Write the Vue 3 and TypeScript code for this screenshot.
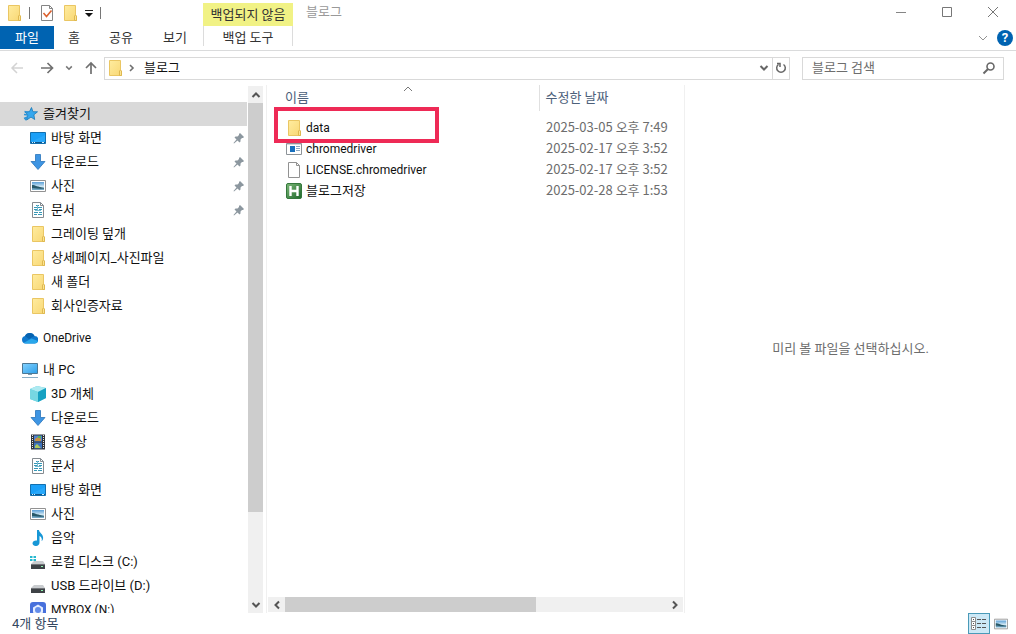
<script setup lang="ts">
import { ref } from 'vue'

interface TreeItem {
  label: string
  icon: string
  level: 'root' | 'child'
  pinned?: boolean
  selected?: boolean
  spaced?: boolean
}

interface FileItem {
  name: string
  icon: string
  modified: string
  marked?: boolean
}

const tree: TreeItem[] = [
  { label: '즐겨찾기', icon: 'star', level: 'root', selected: true },
  { label: '바탕 화면', icon: 'desktop', level: 'child', pinned: true },
  { label: '다운로드', icon: 'download', level: 'child', pinned: true },
  { label: '사진', icon: 'picture', level: 'child', pinned: true },
  { label: '문서', icon: 'document', level: 'child', pinned: true },
  { label: '그레이팅 덮개', icon: 'folder', level: 'child' },
  { label: '상세페이지_사진파일', icon: 'folder', level: 'child' },
  { label: '새 폴더', icon: 'folder', level: 'child' },
  { label: '회사인증자료', icon: 'folder', level: 'child' },
  { label: 'OneDrive', icon: 'cloud', level: 'root', spaced: true },
  { label: '내 PC', icon: 'computer', level: 'root', spaced: true },
  { label: '3D 개체', icon: 'cube', level: 'child' },
  { label: '다운로드', icon: 'download', level: 'child' },
  { label: '동영상', icon: 'video', level: 'child' },
  { label: '문서', icon: 'document', level: 'child' },
  { label: '바탕 화면', icon: 'desktop', level: 'child' },
  { label: '사진', icon: 'picture', level: 'child' },
  { label: '음악', icon: 'music', level: 'child' },
  { label: '로컬 디스크 (C:)', icon: 'system-drive', level: 'child' },
  { label: 'USB 드라이브 (D:)', icon: 'drive', level: 'child' },
  { label: 'MYBOX (N:)', icon: 'mybox', level: 'child' },
]

const files: FileItem[] = [
  { name: 'data', icon: 'folder', modified: '2025-03-05 오후 7:49', marked: true },
  { name: 'chromedriver', icon: 'program', modified: '2025-02-17 오후 3:52' },
  { name: 'LICENSE.chromedriver', icon: 'blank', modified: '2025-02-17 오후 3:52' },
  { name: '블로그저장', icon: 'script', modified: '2025-02-28 오후 1:53' },
]

const query = ref('')
const isLatin = (text: string): boolean => /^[\x20-\x7e]+$/.test(text)
</script>

<template>
  <div class="window">
    <svg class="defs" width="0" height="0" aria-hidden="true">
      <defs>
        <linearGradient id="g-folder" x1="0" y1="0" x2="1" y2="1">
          <stop offset="0" stop-color="#ffec9f" /><stop offset="1" stop-color="#f8d774" />
        </linearGradient>
        <linearGradient id="g-sky" x1="0" y1="0" x2="0" y2="1">
          <stop offset="0" stop-color="#5b9fd6" /><stop offset=".6" stop-color="#d6ebf5" /><stop offset=".8" stop-color="#5f93ae" /><stop offset="1" stop-color="#7fb2d0" />
        </linearGradient>
        <linearGradient id="g-green" x1="0" y1="0" x2="1" y2="1">
          <stop offset="0" stop-color="#7db878" /><stop offset="1" stop-color="#1e682b" />
        </linearGradient>
        <linearGradient id="g-screen" x1="0" y1="0" x2="1" y2="1">
          <stop offset="0" stop-color="#83d2ff" /><stop offset="1" stop-color="#2d9fe9" />
        </linearGradient>
      </defs>
      <symbol id="i-folder" viewBox="0 0 16 16">
        <path d="M2.5 .5h11v10l1 1v4h-12z" fill="url(#g-folder)" stroke="#eac663" />
        <path d="M12.5 15.500v-4.500l1-1 1 1v4.500z" fill="#fbe491" stroke="#dfb850" />
      </symbol>
      <symbol id="i-star" viewBox="0 0 16 16">
        <path d="M9.500 1.500l1.400 4.200 4.600.1-3.600 3 .8 4.700-3.700-2.400-4.500 3 1.300-5L3 6l4.500-.4z" fill="#35a7ee" stroke="#1878b8" stroke-width=".8" />
        <path d="M2.500 5.500L6 6.500M2 8.500l4 .5M2 12.500l3.500-1.500M3 14l2-1.500" stroke="#2d94d7" stroke-width="1.400" />
      </symbol>
      <symbol id="i-desktop" viewBox="0 0 16 16">
        <path d="M.5 2.500h15v11h-15z" fill="#1ba0f8" stroke="#126fae" />
        <path d="M1 12.500h14" stroke="#0d568d" /><path d="M2 12.500h1M4 12.500h1M12 12.500h2" stroke="#d5f1ff" />
        <path d="M1 12L15 5v7z" fill="#43b6ff" opacity=".35" />
      </symbol>
      <symbol id="i-download" viewBox="0 0 16 16">
        <path d="M5.500.5h5v7h4.500l-7 8-7-8h4.500z" fill="#3e95e3" stroke="#2975bb" stroke-width=".8" />
      </symbol>
      <symbol id="i-picture" viewBox="0 0 16 16">
        <path d="M.5 2.500h15v11h-15z" fill="#fff" stroke="#929292" />
        <path d="M2 4h12v8H2z" fill="url(#g-sky)" />
        <path d="M2 7c3 0 6 2 12 3v.500C8 11 5 10 2 10z" fill="#28596a" />
      </symbol>
      <symbol id="i-document" viewBox="0 0 16 16">
        <path d="M2.500.5h8l3 3v12h-11z" fill="#fff" stroke="#858b90" />
        <path d="M10.500.5v3h3" fill="none" stroke="#858b90" />
        <path d="M6 3.500h3M4 5.500h3M8 5.500h4M4 7.500h3M9 7.500h3M4 10.500h4M9 10.500h3M4 12.500h3M8 12.500h4" stroke="#3798b7" />
        <path d="M7.500 3v5M5 8.500h6" stroke="#75b9cf" />
      </symbol>
      <symbol id="i-cloud" viewBox="0 0 16 16">
        <path d="M3.500 13.500a3.800 3.800 0 0 1-.5-7.500A5.200 5.200 0 0 1 12.500 6 3.700 3.700 0 0 1 12.500 13.500z" fill="#0f78cd" />
        <path d="M3 6A5.200 5.200 0 0 1 12.500 6L7 9z" fill="#0763b0" />
        <path d="M1.500 12.900L9.500 8.500 16 11c-.5 1.500-1.500 2.500-3.500 2.500h-9z" fill="#29a7eb" />
      </symbol>
      <symbol id="i-computer" viewBox="0 0 16 16">
        <path d="M.5 1.500h15v10h-15z" fill="url(#g-screen)" stroke="#4d7894" />
        <path d="M6 12h4v1H6z" fill="#789bb1" /><path d="M0 15.500h16" stroke="#8baec5" />
      </symbol>
      <symbol id="i-cube" viewBox="0 0 16 16">
        <path d="M0 3l7-3 9 2v10l-8 4-8-3z" fill="#5bcbdc" />
        <path d="M0 3l7-3 9 2-8 4z" fill="#aeeaf1" /><path d="M8 6l8-4v10l-8 4z" fill="#16a1c2" /><path d="M0 3l8 3v10l-8-3z" fill="#76d7e2" />
      </symbol>
      <symbol id="i-video" viewBox="0 0 16 16">
        <path d="M1 .500h14v15H1z" fill="#31343a" />
        <path d="M2.500 1v14M13.500 1v14" stroke="#e8e8e8" stroke-dasharray="1 1" />
        <path d="M4 1.500h8v6H4z" fill="#4d82d4" /><path d="M4 8.500h8v6H4z" fill="#3e72bc" />
        <path d="M5 5l3-2 3 2v2H5z" fill="#c89042" /><path d="M5 12l2-2 4 4H5z" fill="#afca5d" /><path d="M8 2h3v2H8z" fill="#55b45a" />
      </symbol>
      <symbol id="i-music" viewBox="0 0 16 16">
        <path d="M7 0h2c0 3 5 4 4 9-.3 1-1 2-1.500 2 1-3-.5-4-2-5v6.500C9.500 17 3 17 2.500 13.500 2.500 11 5 10 7 10.500z" fill="#1797d6" />
      </symbol>
      <symbol id="i-drive" viewBox="0 0 16 16">
        <path d="M4 7h9l2 3H1z" fill="#c9cccf" /><path d="M1 10h14v5H1z" fill="#3e4246" />
        <path d="M1 10.500h14" stroke="#727579" /><path d="M11 12h2v1h-2z" fill="#8ff4b0" />
      </symbol>
      <symbol id="i-system-drive" viewBox="0 0 16 16">
        <path d="M4 7h9l2 3H1z" fill="#c9cccf" /><path d="M1 10h14v5H1z" fill="#3e4246" />
        <path d="M1 10.500h14" stroke="#727579" /><path d="M11 12h2v1h-2z" fill="#8ff4b0" />
        <path d="M0 2h2.500v2H0zM3.500 2H6v2H3.500zM0 5h2.500v2H0zM3.500 5H6v2H3.500z" fill="#25b8cf" />
      </symbol>
      <symbol id="i-mybox" viewBox="0 0 16 16">
        <rect width="16" height="16" rx="3" fill="#4770dc" />
        <path d="M8 2.500l5 3v5l-5 3-5-3v-5z" fill="#e4edff" /><circle cx="8" cy="8" r="3" fill="#648de9" />
      </symbol>
      <symbol id="i-program" viewBox="0 0 16 16">
        <path d="M.5 2.500h15v11h-15z" fill="#fff" stroke="#8d9398" />
        <path d="M1 3.500h14" stroke="#d3d8dc" /><path d="M4 5h5v6H4z" fill="#176fbd" />
        <path d="M10 5.500h4M10 7.500h4M10 9.500h4" stroke="#8ba8c4" />
      </symbol>
      <symbol id="i-blank" viewBox="0 0 16 16">
        <path d="M2.500.5h8l3 3v12h-11z" fill="#fff" stroke="#929292" /><path d="M10.500.5v3h3" fill="none" stroke="#929292" />
      </symbol>
      <symbol id="i-script" viewBox="0 0 16 16">
        <rect x=".5" y=".5" width="15" height="15" rx="1.500" fill="url(#g-green)" stroke="#34783c" />
        <path d="M4.500 3v10M11.500 3v10M4.500 8h7" stroke="#fff" stroke-width="2.400" />
      </symbol>
      <symbol id="i-pin" viewBox="0 0 12 12">
        <path d="M7 1l4 4-1 1H9L7.500 7.500v2L6.500 10.500 4.500 8.500 1 11.500 .5 11 3.500 7.500 1.500 5.500l1-1h2L6 3V2z" fill="#8c979f" />
      </symbol>
      <symbol id="i-chevron" viewBox="0 0 10 10">
        <path d="M1.500 3l3.500 3.500L8.500 3" fill="none" stroke="currentColor" stroke-width="2" />
      </symbol>
    </svg>

    <header class="titlebar">
      <div class="quick-access">
        <svg class="icon"><use href="#i-folder" /></svg>
        <span class="divider"></span>
        <button type="button" class="properties" aria-label="속성">
          <svg class="icon" viewBox="0 0 16 16">
            <path d="M2.500.5h8l3 3v12h-11z" fill="#fff" stroke="#858585" /><path d="M10.500.5v3h3" fill="none" stroke="#858585" />
            <path d="M4.500 8l3 3.500 5-6" fill="none" stroke="#dc622f" stroke-width="1.600" />
          </svg>
        </button>
        <button type="button" aria-label="새 폴더"><svg class="icon"><use href="#i-folder" /></svg></button>
        <button type="button" aria-label="빠른 실행 도구 모음 사용자 지정">
          <svg width="8" height="8" viewBox="0 0 8 8"><path d="M0 1.500h8" stroke="#222" /><path d="M0 4h8L4 8z" fill="#111" /></svg>
        </button>
        <span class="divider"></span>
      </div>
      <div class="context-title">백업되지 않음</div>
      <h1>블로그</h1>
      <div class="window-controls">
        <button type="button" aria-label="최소화"><svg width="12" height="12" viewBox="0 0 12 12"><path d="M1 6.500h10" stroke="#858585" /></svg></button>
        <button type="button" aria-label="최대화"><svg width="12" height="12" viewBox="0 0 12 12"><path d="M1.500 1.500h9v9h-9z" fill="none" stroke="#777" /></svg></button>
        <button type="button" aria-label="닫기"><svg width="12" height="12" viewBox="0 0 12 12"><path d="M1 1l10 10M11 1L1 11" stroke="#777" /></svg></button>
      </div>
    </header>

    <nav class="ribbon" aria-label="리본">
      <button type="button" class="file-tab">파일</button>
      <button type="button" class="home-tab">홈</button>
      <button type="button" class="tab">공유</button>
      <button type="button" class="tab">보기</button>
      <button type="button" class="context-tab">백업 도구</button>
      <div class="ribbon-tools">
        <button type="button" aria-label="리본 확장"><svg width="10" height="10" viewBox="0 0 10 10"><path d="M1 3l4 4 4-4" fill="none" stroke="#929292" /></svg></button>
        <button type="button" class="help" aria-label="도움말">?</button>
      </div>
    </nav>

    <div class="toolbar">
      <div class="history">
        <button type="button" aria-label="뒤로" disabled><svg width="14" height="14" viewBox="0 0 14 14"><path d="M13 7H2M7 2L2 7l5 5" fill="none" stroke="#d3d3d3" stroke-width="1.500" /></svg></button>
        <button type="button" aria-label="앞으로"><svg width="14" height="14" viewBox="0 0 14 14"><path d="M1 7h11M7.500 2l5 5-5 5" fill="none" stroke="#707070" stroke-width="1.700" /></svg></button>
        <button type="button" class="recent" aria-label="최근 위치"><svg width="8" height="8"><use href="#i-chevron" /></svg></button>
        <button type="button" aria-label="위로"><svg width="14" height="14" viewBox="0 0 14 14"><path d="M7 13V2M2 7l5-5 5 5" fill="none" stroke="#707070" stroke-width="1.700" /></svg></button>
      </div>
      <div class="address">
        <svg class="icon"><use href="#i-folder" /></svg>
        <svg class="crumb-arrow" width="10" height="10" viewBox="0 0 10 10"><path d="M3 2l3 3-3 3" fill="none" stroke="#707070" stroke-width="1.600" /></svg>
        <button type="button" class="crumb">블로그</button>
        <button type="button" class="address-open" aria-label="이전 위치"><svg width="10" height="10"><use href="#i-chevron" /></svg></button>
        <button type="button" class="refresh" aria-label="새로 고침">
          <svg width="12" height="12" viewBox="0 0 12 12"><path d="M8.500 2.500A4.300 4.300 0 1 1 3.500 2.500M2 1.500h3v3.500" fill="none" stroke="#666" stroke-width="1.500" /></svg>
        </button>
      </div>
      <label class="search">
        <input v-model="query" type="text" placeholder="블로그 검색" aria-label="블로그 검색">
        <svg width="14" height="14" viewBox="0 0 14 14"><circle cx="8.500" cy="5.500" r="3.500" fill="none" stroke="#686868" stroke-width="1.600" /><path d="M6 8l-4.500 4.500" stroke="#686868" stroke-width="2" /></svg>
      </label>
    </div>

    <main class="content">
      <aside class="nav-pane">
        <ul class="tree">
          <li v-for="(item, i) in tree" :key="i" :class="{ spaced: item.spaced }">
            <button type="button" class="tree-row" :class="[item.level, { selected: item.selected }]">
              <svg class="icon"><use :href="`#i-${item.icon}`" /></svg>
              <span class="label" :class="{ latin: isLatin(item.label) }">{{ item.label }}</span>
              <svg v-if="item.pinned" class="pin" width="12" height="12"><use href="#i-pin" /></svg>
            </button>
          </li>
        </ul>
        <div class="scroll vertical">
          <button type="button" aria-label="위로 스크롤"><svg class="flip" width="10" height="10"><use href="#i-chevron" /></svg></button>
          <div class="track"><div class="thumb"></div></div>
          <button type="button" aria-label="아래로 스크롤"><svg width="10" height="10"><use href="#i-chevron" /></svg></button>
        </div>
      </aside>

      <section class="list-pane">
        <table>
          <colgroup><col class="name-col"><col></colgroup>
          <thead>
            <tr>
              <th scope="col">이름<svg class="sort" width="10" height="6" viewBox="0 0 10 6"><path d="M1 5l4-4 4 4" fill="none" stroke="#777" /></svg></th>
              <th scope="col" class="date-head">수정한 날짜</th>
            </tr>
          </thead>
          <tbody>
            <tr v-for="file in files" :key="file.name">
              <td>
                <div class="file">
                  <svg class="icon"><use :href="`#i-${file.icon}`" /></svg>
                  <span :class="{ latin: isLatin(file.name) }">{{ file.name }}</span>
                  <span v-if="file.marked" class="marker"></span>
                </div>
              </td>
              <td class="date">{{ file.modified }}</td>
            </tr>
          </tbody>
        </table>
        <div class="scroll horizontal">
          <button type="button" aria-label="왼쪽으로 스크롤"><svg class="left" width="10" height="10"><use href="#i-chevron" /></svg></button>
          <div class="track"><div class="thumb"></div></div>
          <button type="button" aria-label="오른쪽으로 스크롤"><svg class="right" width="10" height="10"><use href="#i-chevron" /></svg></button>
        </div>
      </section>

      <section class="preview"><p>미리 볼 파일을 선택하십시오.</p></section>
    </main>

    <footer class="status">
      <span>4개 항목</span>
      <div class="views">
        <button type="button" class="active" aria-label="자세히" aria-pressed="true">
          <svg width="18" height="16" viewBox="0 0 18 16">
            <path d="M1.500 1.500h4v4h-4zM1.500 5.500h4v4h-4zM1.500 9.500h4v4h-4z" fill="#fff" stroke="#8c8c8c" />
            <path d="M3 3.500h1M3 7.500h1M3 11.500h1M7 3.500h4M12 3.500h4M7 7.500h4M12 7.500h4M7 11.500h4M12 11.500h4" stroke="#555" />
          </svg>
        </button>
        <button type="button" aria-label="큰 아이콘" aria-pressed="false"><svg width="14" height="14"><use href="#i-picture" /></svg></button>
      </div>
    </footer>
  </div>
</template>

<style>
body {
  margin: 0;
  background: #fff;
}
</style>

<style scoped>
.window {
  display: flex;
  flex-direction: column;
  height: 100vh;
  overflow: hidden;
  background: #fff;
  color: #111;
  font: 13px/20px Roboto, "Noto Sans CJK KR", sans-serif;
}
.window *, .window *::before {
  box-sizing: border-box;
}
.defs {
  position: absolute;
}
svg {
  display: block;
  flex: none;
}
button {
  display: flex;
  align-items: center;
  justify-content: center;
  margin: 0;
  padding: 0;
  border: 0;
  background: none;
  color: inherit;
  font: inherit;
}
.icon {
  width: 16px;
  height: 16px;
}
.latin {
  font-size: 12px;
}

.titlebar {
  display: flex;
  flex: none;
  height: 26px;
}
.quick-access {
  display: flex;
  align-items: center;
  gap: 7px;
  width: 203px;
  padding-left: 6px;
}
.divider {
  width: 1px;
  height: 12px;
  background: #777;
}
.properties {
  margin-left: 2px;
}
.context-title {
  display: flex;
  align-items: center;
  justify-content: center;
  width: 90px;
  margin-top: 3px;
  background: #f1f285;
  color: #333;
}
h1 {
  margin: 0 0 0 13px;
  color: #999;
  font-size: 13px;
  font-weight: 400;
  line-height: 24px;
}
.window-controls {
  display: flex;
  height: 24px;
  margin-left: auto;
}
.window-controls button {
  width: 46px;
}

.ribbon {
  display: flex;
  flex: none;
  height: 25px;
  border-bottom: 1px solid #dadbdc;
  color: #333;
}
.ribbon > button {
  height: 23px;
}
.ribbon .file-tab {
  width: 54px;
  background: #0063b1;
  color: #fff;
}
.home-tab {
  width: 40px;
}
.tab {
  width: 54px;
}
.ribbon .context-tab {
  width: 90px;
  height: 20px;
  margin-left: 1px;
  padding-top: 3px;
  border: solid #dcdcdc;
  border-width: 0 1px;
}
.ribbon-tools {
  display: flex;
  align-items: center;
  gap: 9px;
  margin-left: auto;
  padding-right: 3px;
}
.help {
  width: 16px;
  height: 16px;
  border-radius: 50%;
  background: #0063b1;
  color: #fff;
  font-weight: 700;
  line-height: 16px;
}

.toolbar {
  display: flex;
  flex: none;
  align-items: center;
  height: 34px;
  padding-right: 12px;
}
.history {
  display: flex;
  align-items: center;
  width: 104px;
  padding-left: 10px;
  gap: 16px;
}
.history .recent {
  margin: 0 -5px;
  color: #777;
}
.address, .search {
  display: flex;
  align-items: center;
  height: 23px;
  border: 1px solid #d9d9d9;
}
.address {
  flex: 1;
  padding-left: 2px;
}
.crumb-arrow {
  margin: 0 7px 0 4px;
}
.address-open {
  width: 16px;
  height: 21px;
  margin-left: auto;
  color: #666;
}
.refresh {
  width: 17px;
  height: 21px;
  border-left: 1px solid #d9d9d9;
}
.search {
  width: 202px;
  margin-left: 12px;
  padding: 0 7px 0 9px;
}
.search input {
  flex: 1;
  min-width: 0;
  padding: 0;
  border: 0;
  outline: 0;
  background: none;
  font: inherit;
}
.search input::placeholder {
  color: #6d6d6d;
  opacity: 1;
}

.content {
  display: flex;
  flex: 1;
  min-height: 0;
}
.nav-pane {
  display: flex;
  flex: none;
  width: 263px;
}
.tree {
  flex: 1;
  overflow: hidden;
  margin: 0;
  padding: 17px 1px 0 0;
  list-style: none;
}
.spaced {
  margin-top: 8px;
}
.tree-row {
  justify-content: flex-start;
  width: 100%;
  height: 24px;
  padding: 0 2px 0 30px;
  gap: 5px;
  white-space: nowrap;
}
.tree-row.root {
  padding-left: 22px;
}
.tree-row.selected {
  background: #d9d9d9;
}
.pin {
  margin-left: auto;
}

.scroll {
  display: flex;
  background: #f0f0f0;
  color: #555;
}
.scroll button {
  flex: none;
}
.scroll .track {
  flex: 1;
}
.scroll .thumb {
  background: #cdcdcd;
}
.vertical {
  flex-direction: column;
  width: 15px;
  margin-top: 1px;
}
.vertical button {
  height: 17px;
}
.vertical .thumb {
  height: 83%;
}
.horizontal {
  height: 15px;
  margin: auto 1px 1px;
}
.horizontal button {
  width: 17px;
}
.horizontal .thumb {
  width: 66%;
  height: 15px;
}
.flip {
  transform: rotate(180deg);
}
.left {
  transform: rotate(90deg);
}
.right {
  transform: rotate(-90deg);
}

.list-pane {
  display: flex;
  flex: none;
  flex-direction: column;
  width: 419px;
  margin-left: 3px;
  border: solid #f0f0f0;
  border-width: 0 1px;
}
table {
  width: 100%;
  border-collapse: collapse;
  table-layout: fixed;
}
.name-col {
  width: 272px;
}
th {
  position: relative;
  height: 26px;
  padding: 0 0 0 18px;
  color: #4c607a;
  font-weight: 400;
  text-align: left;
}
.sort {
  position: absolute;
  top: 1px;
  left: 50%;
}
th.date-head {
  padding-left: 6px;
  border-left: 1px solid #e0e0e0;
}
tbody::before {
  display: block;
  height: 6px;
  content: "";
}
td {
  height: 21px;
  padding: 0;
}
.file {
  position: relative;
  display: flex;
  align-items: center;
  gap: 4px;
  height: 21px;
  padding-left: 19px;
}
.marker {
  position: absolute;
  top: -10px;
  left: 7px;
  z-index: 1;
  width: 165px;
  height: 36px;
  border: 4px solid #ee2a56;
}
.date {
  padding: 0 0 1px 7px;
  color: #6d6d6d;
  font-family: "Noto Sans CJK KR", sans-serif;
  line-height: 18px;
}
.preview {
  display: flex;
  flex: 1;
  align-items: center;
  justify-content: center;
  color: #6d6d6d;
}
.preview p {
  margin: 0;
}

.status {
  display: flex;
  flex: none;
  align-items: center;
  justify-content: space-between;
  height: 21px;
  padding: 0 5px 0 12px;
  color: #33475f;
}
.views {
  display: flex;
}
.views button {
  width: 21px;
  height: 21px;
}
.views .active {
  width: 22px;
  border: 1px solid #4a9ab8;
  background: #cce8f6;
}
</style>
